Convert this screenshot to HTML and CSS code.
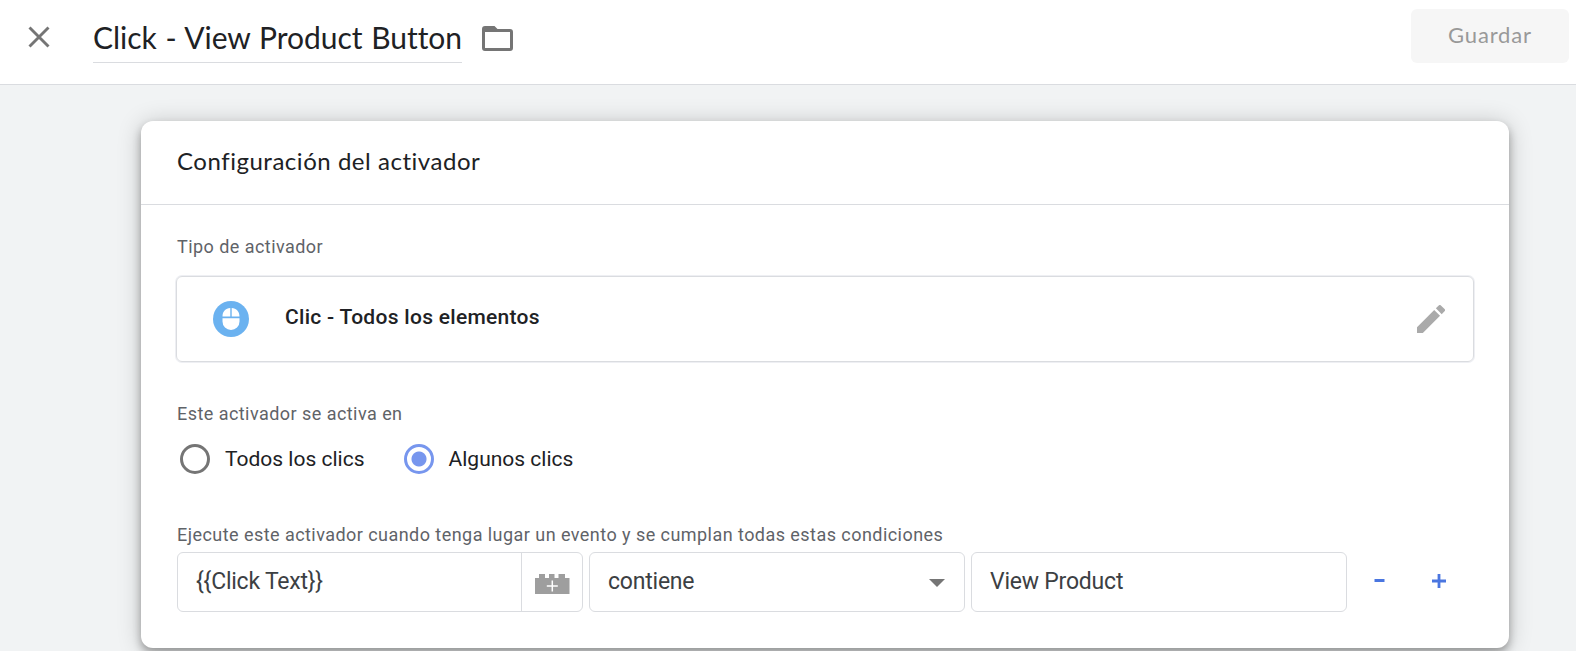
FILE: index.html
```html
<!DOCTYPE html>
<html lang="es">
<head>
<meta charset="utf-8">
<title>Click - View Product Button</title>
<link rel="stylesheet" href="styles.css">
</head>
<body>
<header class="topbar">
  <button class="close" aria-label="Cerrar"><svg width="22" height="22" viewBox="0 0 22 22"><path d="M1.500 1.500l19 19M20.500 1.500l-19 19" stroke="#757575" stroke-width="2.900" fill="none"/></svg></button>
  <h1 class="title"><span>Click - View Product Button</span></h1>
  <svg class="folder" width="31" height="25" viewBox="0 0 31 25"><path fill="#757575" fill-rule="evenodd" d="M3 0h9.500l3 3H28a3 3 0 0 1 3 3v16a3 3 0 0 1-3 3H3a3 3 0 0 1-3-3V3a3 3 0 0 1 3-3zM3 6v16h25V6z"/></svg>
  <button class="save"><span>Guardar</span></button>
</header>
<main class="card">
  <h2 class="card-title"><span>Configuración del activador</span></h2>
  <section class="card-body">
    <div class="label"><span>Tipo de activador</span></div>
    <div class="type-box">
      <svg width="36" height="36" viewBox="0 0 36 36"><circle cx="18" cy="18" r="18" fill="#6bb2f0"/><path fill="#fff" d="M17.300 7v8.500H9.500C9.500 10.500 12.500 7.300 17.300 7zM18.700 7v8.500h7.800C26.500 10.500 23.500 7.300 18.700 7zM9.500 17.200h17v3.300a8.500 8.500 0 0 1-17 0z"/></svg>
      <span class="type-name">Clic - Todos los elementos</span>
      <svg class="pencil" width="28" height="28" viewBox="3 3 18 18"><path fill="#aaa" d="M3 17.250V21h3.750L17.810 9.940l-3.750-3.750L3 17.250zM20.710 7.040a.996.996 0 0 0 0-1.410l-2.340-2.340a.996.996 0 0 0-1.410 0l-1.830 1.830 3.750 3.750 1.830-1.830z"/></svg>
    </div>
    <div class="label label-fires"><span>Este activador se activa en</span></div>
    <div class="radios">
      <label class="radio"><i class="ring"></i><span>Todos los clics</span></label>
      <label class="radio"><i class="ring on"></i><span>Algunos clics</span></label>
    </div>
    <div class="label label-cond"><span>Ejecute este activador cuando tenga lugar un evento y se cumplan todas estas condiciones</span></div>
    <div class="condition">
      <div class="field variable"><span class="value">{{Click Text}}</span><div class="brick"><svg width="35" height="21" viewBox="0 0 35 21"><path fill="#9e9e9e" d="M0 5h4V1h6v4h4V1h5.500v4h4V1H30v4h4.500v16H0z"/><path d="M17.300 7.500v11M11.800 13h11" stroke="#fff" stroke-width="1.500"/></svg></div></div>
      <div class="field select"><span class="value">contiene</span><i class="caret"></i></div>
      <div class="field"><span class="value">View Product</span></div>
      <button class="sign minus" aria-label="Quitar"><svg width="12" height="3" viewBox="0 0 12 3"><path fill="#4a76e0" d="M0.500 0h10v3h-10z"/></svg></button>
      <button class="sign plus" aria-label="Añadir"><svg width="14" height="14" viewBox="0 0 14 14"><path d="M7 0v14M0 7h14" stroke="#4a76e0" stroke-width="2.800"/></svg></button>
    </div>
  </section>
</main>
</body>
</html>
```
FILE: styles.css
```css
* { box-sizing: border-box; }
body { margin: 0; height: 651px; overflow: hidden; background: #f1f3f4; color: #202124; font-family: Roboto, "Liberation Sans", sans-serif; }
h1, h2 { margin: 0; font-weight: 400; }
button { border: 0; padding: 0; background: none; }
svg { display: block; flex: none; }
.topbar { display: flex; align-items: flex-start; height: 85px; background: #fff; border-bottom: 1px solid #dadce0; padding-right: 7px; }
.close { margin: 26px 0 0 28px; width: 22px; }
.title { margin-left: 43px; width: 369px; height: 63px; border-bottom: 1px solid #dadce0; font: 30px/40px Lato, sans-serif; padding-top: 17px; white-space: nowrap; letter-spacing: -0.05px; word-spacing: 1.2px; }
.folder { margin: 26px 0 0 20px; }
.save { margin: 9px 0 0 auto; width: 158px; height: 54px; border-radius: 6px; background: #f6f6f6; color: #999; font: 22px/52px Lato, sans-serif; letter-spacing: 0.85px; padding-bottom: 2px; }
.card { margin: 36px 67px 0 141px; height: 527px; background: #fff; border-radius: 12px; box-shadow: 0 5px 8px rgba(0,0,0,.3), 0 2px 25px rgba(0,0,0,.2); }
.card-title { height: 84px; padding-left: 36px; border-bottom: 1px solid #dadce0; font: 24px/79px Lato, sans-serif; letter-spacing: 0.53px; }
.card-body { padding: 30px 34px 0 35px; }
.label { height: 24px; padding-left: 1px; font-size: 18px; line-height: 24px; color: #5f6368; letter-spacing: 0.45px; white-space: nowrap; }
.type-box { display: flex; align-items: center; height: 86px; margin: 17px 1px 0 0; padding: 0 28px 0 36px; border: 1px solid #dadce0; border-radius: 6px; box-shadow: 0 0 0 1px #eeeff3; }
.type-name { margin: -4px 0 0 36px; font-size: 21px; line-height: 28px; font-weight: 500; letter-spacing: 0.29px; }
.pencil { margin-left: auto; }
.label-fires { margin-top: 40px; }
.radios { display: flex; gap: 39px; margin: 18px 0 0 4px; }
.radio { display: flex; gap: 15px; height: 30px; font-size: 21px; line-height: 30px; white-space: nowrap; }
.ring { width: 30px; height: 30px; border: 3px solid #757575; border-radius: 50%; }
.ring.on { border-color: #7796ee; background: radial-gradient(circle, #7796ee 7px, transparent 8px); }
.label-cond { margin-top: 49px; }
.condition { display: flex; margin: 5px 0 0 1px; }
.field { display: flex; align-items: center; width: 376px; height: 60px; margin-right: 6px; padding-left: 18px; border: 1px solid #dadce0; border-radius: 6px; color: #3c4043; font-size: 23px; letter-spacing: -0.22px; }
.variable { width: 406px; }
.value { line-height: 30px; }
.brick { margin-left: auto; width: 61px; height: 58px; padding: 20px 0 0 13px; border-left: 1px solid #dadce0; }
.caret { margin: 1px 19px 0 auto; border: 8px solid transparent; border-top-color: #757575; border-bottom: 0; }
.sign { height: 57px; display: flex; align-items: center; }
.minus { margin-left: 21px; }
.plus { margin-left: 46px; }
```
